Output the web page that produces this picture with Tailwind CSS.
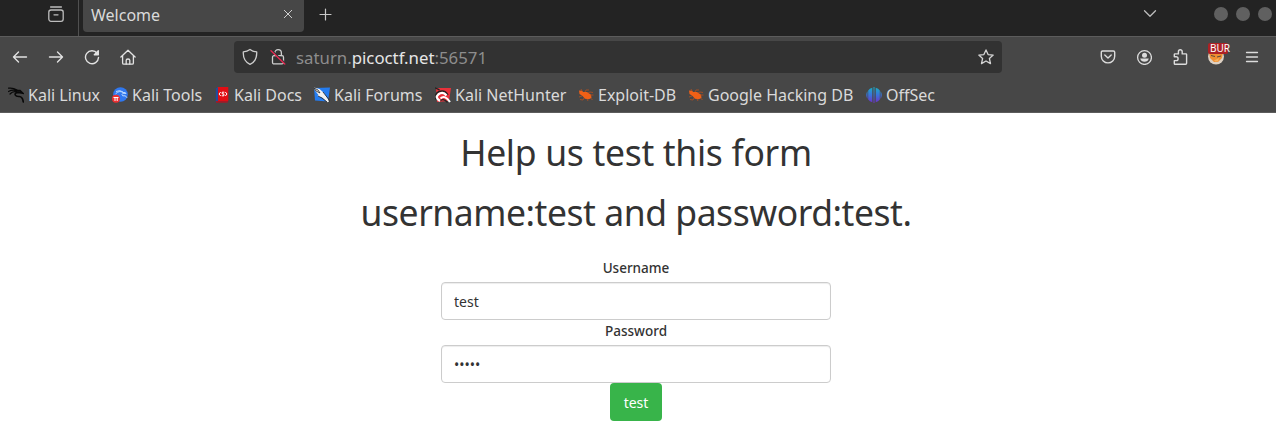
<!DOCTYPE html>
<html lang="en">
<head>
<meta charset="utf-8">
<title>Welcome</title>
<script src="https://cdn.jsdelivr.net/npm/@tailwindcss/browser@4"></script>
</head>
<body class="w-[1276px] h-[444px] overflow-hidden bg-white font-['Noto_Sans',sans-serif] text-[#333]">
<header class="h-[113px] bg-[#474747] border-b border-[#5c5c5c] text-[#dadada]">
  <!-- Tab strip -->
  <div class="flex h-[37px] bg-[#232323] border-b border-[#5c5c5c]">
    <div class="flex w-[79px] border-r border-[#505050] pl-[48px] pt-[6px]">
      <svg class="w-4 h-4" viewBox="0 0 16 16" fill="none" stroke="#bdbdbd" stroke-width="1.3" stroke-linecap="round"><path d="M2.6 1h10.8"/><rect x=".8" y="4" width="14.4" height="11.3" rx="2.2"/><path d="M6 8.8h4"/></svg>
    </div>
    <div class="ml-1 flex h-8 w-[221px] items-start rounded-b bg-[#474747] pl-2 pr-[11px]">
      <span class="flex-1 pt-[3px] text-[16px] leading-6">Welcome</span>
      <svg class="mt-[9px] w-[10px] h-[10px]" viewBox="0 0 10 10" fill="none" stroke="#d0d0d0" stroke-width="1" stroke-linecap="round"><path d="M1.300 1.300l7.400 7.400M8.700 1.300L1.300 8.700"/></svg>
    </div>
    <svg class="ml-[15px] mt-[8px] w-[13px] h-[13px]" viewBox="0 0 13 13" fill="none" stroke="#c8c8c8" stroke-width="1.2" stroke-linecap="round"><path d="M6.5 1v11M1 6.5h11"/></svg>
    <div class="ml-auto flex">
      <svg class="mt-[9px] mr-[57px] w-[14px] h-[9px]" viewBox="0 0 14 9" fill="none" stroke="#bdbdbd" stroke-width="1.3" stroke-linecap="round" stroke-linejoin="round"><path d="M1.5 1.7L7 7.2l5.500-5.500"/></svg>
      <div class="flex gap-2 pr-1 pt-[7px]">
        <div class="w-[14px] h-[14px] rounded-full bg-[#606060]"></div>
        <div class="w-[14px] h-[14px] rounded-full bg-[#606060]"></div>
        <div class="w-[14px] h-[14px] rounded-full bg-[#606060]"></div>
      </div>
    </div>
  </div>
  <!-- Navigation toolbar -->
  <div class="flex h-10 items-center pl-3">
    <div class="flex w-[222px] gap-5">
      <svg class="w-4 h-4" viewBox="0 0 16 16" fill="none" stroke="#e2e2e2" stroke-width="1.4" stroke-linecap="round" stroke-linejoin="round"><path d="M14.500 8H1.500M6.500 3L1.500 8l5 5"/></svg>
      <svg class="w-4 h-4" viewBox="0 0 16 16" fill="none" stroke="#e2e2e2" stroke-width="1.4" stroke-linecap="round" stroke-linejoin="round"><path d="M1.500 8h13M9.500 3l5 5-5 5"/></svg>
      <svg class="w-4 h-4" viewBox="0 0 16 16" fill="none" stroke="#e2e2e2" stroke-width="1.4" stroke-linecap="round" stroke-linejoin="round"><path d="M13.200 4.300A6.500 6.500 0 1 0 14.500 8.500"/><path d="M14.300 1.800v4h-4z" fill="#e2e2e2"/></svg>
      <svg class="w-4 h-4" viewBox="0 0 16 16" fill="none" stroke="#e2e2e2" stroke-width="1.300" stroke-linecap="round" stroke-linejoin="round"><path d="M.9 8L8 1.200 15.100 8M2.600 6.700v7.200q0 1.300 1.300 1.300h8.200q1.300 0 1.300-1.300V6.700"/><path d="M6.200 15v-3.800q0-1.200 1.800-1.200t1.800 1.200V15"/></svg>
    </div>
    <div class="flex h-8 w-[768px] items-center rounded bg-[#323232] pl-2 pr-2">
      <svg class="w-4 h-[18px]" viewBox="0 0 16 18" fill="none" stroke="#cfcfcf" stroke-width="1.300" stroke-linejoin="round"><path d="M8 1.400Q10.800 3.500 14.700 3.900C15 9.500 12.700 14.300 8 16.300 3.300 14.300 1 9.500 1.300 3.900Q5.200 3.500 8 1.400z"/></svg>
      <svg class="ml-3 w-4 h-[18px]" viewBox="0 0 16 18" fill="none" stroke="#cfcfcf" stroke-width="1.300" stroke-linecap="round"><path d="M4.800 7.500V5a3.300 3.300 0 0 1 6.600 0v2.500"/><rect x="2.500" y="7.700" width="11" height="8.200" rx="1.500"/><path d="M1.800 2.200l13.200 12.800" stroke="#323232" stroke-width="1.500"/><path d="M1 2.700l13.800 13.400" stroke="#e22850" stroke-width="1.400"/></svg>
      <div class="ml-[10px] flex-1 pt-[2px] text-[16.800px] leading-6 text-[#8d8d8d]">saturn.<span class="text-[#e6e6e6]">picoctf.net</span>:56571</div>
      <svg class="w-4 h-4" viewBox="0 0 16 16" fill="none" stroke="#d4d4d4" stroke-width="1.300" stroke-linejoin="round"><path d="M8 .9l2.100 4.700 5.100.5-3.800 3.400 1.100 5.100L8 12l-4.500 2.600 1.100-5.100L.8 6.100l5.100-.5z"/></svg>
    </div>
    <div class="ml-[98px] flex gap-5">
      <svg class="w-4 h-4" viewBox="0 0 16 16" fill="none" stroke="#dcdcdc" stroke-width="1.400" stroke-linecap="round" stroke-linejoin="round"><path d="M2.600 2h10.800q1.300 0 1.300 1.300v3.900a6.700 6.700 0 0 1-13.400 0V3.300Q1.300 2 2.600 2z"/><path d="M4.800 6L8 9l3.200-3"/></svg>
      <svg class="w-4 h-4" viewBox="0 0 16 16"><circle cx="8.500" cy="8.500" r="6.900" fill="none" stroke="#dcdcdc" stroke-width="1.300"/><circle cx="8.500" cy="6.200" r="2.500" fill="#dcdcdc"/><path d="M4.200 9.500h8.600a4.500 4.500 0 0 1-8.600 0z" fill="#dcdcdc"/></svg>
      <svg class="w-4 h-4" viewBox="0 0 16 16" fill="none" stroke="#dcdcdc" stroke-width="1.400" stroke-linejoin="round"><path d="M3 15.300h10.500q1.100 0 1.100-1.100V5.600q0-.7-.7-.7H10.200V2.700a1.900 1.900 0 0 0-3.800 0v2.200H3q-.7 0-.7.700v2.200h1.900a1.900 1.900 0 0 1 0 3.800H2.300v2.900q0 .8.700.8z"/></svg>
      <div class="relative w-4 h-4">
        <svg class="w-4 h-4" viewBox="0 0 16 16"><circle cx="8" cy="7.500" r="8" fill="#ddd0c2"/><path d="M1 3h14l-1 6-4 4H6L2 9z" fill="#ef8d32"/><path d="M3 6.500l4 1M13 7l-4 1" stroke="#55483f"/><path d="M6 11.500l5-2.500-1 3.500H7z" fill="#f6b05b"/></svg>
        <div class="absolute left-0 -top-[6px] w-5 h-[11px] rounded-[2px] bg-[#ad2024] pl-[2px] text-[10px] leading-[11px] text-white">BUR</div>
      </div>
      <svg class="w-4 h-4" viewBox="0 0 16 16" fill="none" stroke="#dcdcdc" stroke-width="1.300" stroke-linecap="round"><path d="M2.500 3.500h11M2.500 8h11M2.500 12.500h11"/></svg>
    </div>
  </div>
  <!-- Bookmarks -->
  <div class="flex h-[35px] items-center pl-2 text-[16px] leading-6 whitespace-nowrap">
    <div class="flex w-[104px] items-center gap-1"><svg class="w-4 h-4 shrink-0" viewBox="0 0 16 16" fill="none" stroke="#090909" stroke-linecap="round"><path d="M.5 1.200Q5 .5 9 3M.5 4.500Q5 2 9 4M2 7Q5 3.500 9 5" stroke-width="1.200"/><path d="M8 3.500l4 .2 2.500 2.300-4-.7Q6.500 5.500 7.300 8q.8 1.700 4 1.500 3.300.2 4 5.500" stroke-width="1.700"/></svg><span>Kali Linux</span></div>
    <div class="flex w-[102px] items-center gap-1"><svg class="w-4 h-4 shrink-0" viewBox="0 0 16 16" fill="none"><circle cx="8.500" cy="7.500" r="7.300" fill="#3078ef"/><path d="M4 4.500q4-2 7 .5M3.500 7q3.500-4 7.500-1.500 3-.5 3 1-4-1-4 1t3 1.300q1.500.5 2 2" stroke="#b9d8ff" stroke-width="1"/><circle cx="4" cy="11.800" r="4" fill="#ed2f30"/><path d="M1.500 10.500h5M3 10.500v3.500M5.200 10.500v3.500" stroke="#fff" stroke-width="1"/></svg><span>Kali Tools</span></div>
    <div class="flex w-[100px] items-center gap-1"><svg class="w-4 h-4 shrink-0" viewBox="0 0 16 16" fill="none"><path d="M3.500 0h10.800v14H3.500z" fill="#e10d14"/><path d="M1.800 1.500L4 0v14l-2.200 1.500z" fill="#214c9c"/><path d="M2 14h12.300l-.8 1.800H2z" fill="#a51826"/><path d="M6.700 5L5 7l1.700 2M11.300 5L13 7l-1.700 2M10.300 5.200H8.200v1.700h1.700v1.900H7.700" stroke="#fff" stroke-width="1"/></svg><span>Kali Docs</span></div>
    <div class="flex w-[121px] items-center gap-1"><svg class="w-4 h-4 shrink-0" viewBox="0 0 16 16"><path d="M0 1l16-.5-2 14-13-1z" fill="#247cf0"/><path d="M0 .5L5.500 2 10 6l5.500 8.500-2 .8L8 10.500 3.500 9l1-1L1 3.500z" fill="#f2f2f2"/><path d="M0 1l4 2 2 3-4-2zM9 5l5.500 7 1 3M4 9l4 2 5 4" fill="none" stroke="#222" stroke-width=".8"/></svg><span>Kali Forums</span></div>
    <div class="flex w-[143px] items-center gap-1"><svg class="w-4 h-4 shrink-0" viewBox="0 0 16 16" fill="none"><path d="M1 1h15l-2 13-12 1z" fill="#e9313a"/><path d="M0 .8l4.500 2M1 12.500Q-1 7 4 4.500q6-2 9 3.500" stroke="#222" stroke-width="1.400"/><path d="M5 14Q-.5 10.500 3.500 7.300 8 4 11.500 8.500" stroke="#fff" stroke-width="2.300"/><path d="M5.500 11.500Q10 7.500 15 15" stroke="#fff" stroke-width="2"/><path d="M5.500 13.500q3.500-2.500 7 2" stroke="#252525" stroke-width="1.300"/></svg><span>Kali NetHunter</span></div>
    <div class="flex w-[110px] items-center gap-1"><svg class="w-4 h-4 shrink-0" viewBox="0 0 16 16"><path d="M1 3.500l3 .3 1.200 1.300L9 5l4 2.800.5 3-2.500 1.500-4-.5L4.500 9 1.500 7z" fill="#f16016"/><path d="M4 4L3 2M7 5l1-2 3 0M10 6l2-1 3 .5M12 8h3.500M12.500 11l2 2M9 12l1 2M6 11l-1 2-3-.5M4 9L1 10" fill="none" stroke="#c55018" stroke-width=".7"/></svg><span>Exploit-DB</span></div>
    <div class="flex w-[178px] items-center gap-1"><svg class="w-4 h-4 shrink-0" viewBox="0 0 16 16"><path d="M1 3.500l3 .3 1.200 1.300L9 5l4 2.800.5 3-2.500 1.500-4-.5L4.500 9 1.500 7z" fill="#f16016"/><path d="M4 4L3 2M7 5l1-2 3 0M10 6l2-1 3 .5M12 8h3.500M12.500 11l2 2M9 12l1 2M6 11l-1 2-3-.5M4 9L1 10" fill="none" stroke="#c55018" stroke-width=".7"/></svg><span>Google Hacking DB</span></div>
    <div class="flex items-center gap-1"><svg class="w-4 h-4 shrink-0" viewBox="0 0 16 16"><defs><linearGradient id="offsec" gradientUnits="userSpaceOnUse" x1="0" y1="0" x2="0" y2="16"><stop stop-color="#18b0c4"/><stop offset=".5" stop-color="#3973dc"/><stop offset="1" stop-color="#6f2fc6"/></linearGradient></defs><path d="M6.300.7Q3.500 1.500 2.200 3.500v9q1.500 2 4.100 2.800zM9.700.7Q12.500 1.500 13.800 3.500v9q-1.500 2-4.100 2.800zM7.500 0h1v16h-1zM1.500 4Q-1 8 1.500 12zM14.500 4Q17 8 14.500 12z" fill="url(#offsec)"/></svg><span>OffSec</span></div>
  </div>
</header>
<main class="flex w-[1272px] flex-col items-center">
  <h1 class="mt-[19px] h-10 text-[35.500px] leading-10 whitespace-nowrap tracking-[-0.3px]">Help us test this form</h1>
  <h1 class="mt-5 h-10 text-[35.500px] leading-10 whitespace-nowrap tracking-[-0.460px]">username:test and password:test.</h1>
  <form class="mt-[26px] flex w-[390px] flex-col items-center text-[14px]" onsubmit="return false">
    <label for="u" class="mb-1 h-5 text-[13.500px] font-medium leading-5">Username</label>
    <input id="u" value="test" class="h-[38px] w-full rounded border border-[#ccc] bg-white px-3 pt-px shadow-[inset_0_1px_1px_rgba(0,0,0,0.075)]">
    <label for="p" class="mt-px mb-1 h-5 text-[13.500px] font-medium leading-5">Password</label>
    <input id="p" type="password" value="tests" class="h-[38px] w-full rounded border border-[#ccc] bg-white px-3 pt-px shadow-[inset_0_1px_1px_rgba(0,0,0,0.075)]">
    <button class="h-[38px] w-[52px] rounded bg-[#38b44a] pt-px text-white">test</button>
  </form>
</main>
</body>
</html>
